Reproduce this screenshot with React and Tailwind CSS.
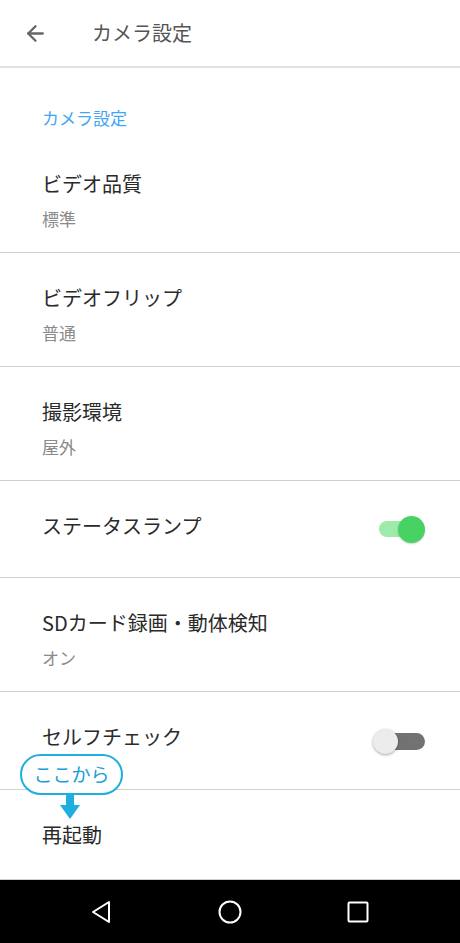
import React from 'react';
import { ArrowLeft } from 'lucide-react';

const font = { fontFamily: '"Noto Sans CJK JP", "Noto Sans", sans-serif' };

const Item = ({ title, sub, h, toggle, children }) => (
  <div className={`relative ${h} border-b border-[#cfcfcf] flex items-start justify-between pl-[42px] pr-[35px]`}>
    <div className="pt-[32px]">
      <div className="text-[20px] leading-[26px] text-[#2a2a2a]">{title}</div>
      {sub && <div className="mt-[11px] text-[17px] leading-[22px] text-[#8a8a8a]">{sub}</div>}
    </div>
    {toggle === 'on' && (
      <div className="mt-[35px] relative w-[48px] h-[26px] flex items-center">
        <div className="absolute left-[2px] w-[40px] h-[16px] rounded-full bg-[#9eeaa9]" />
        <div className="absolute right-0 w-[27px] h-[27px] rounded-full bg-[#47d363] shadow-[0_1px_2px_rgba(0,0,0,0.2)]" />
      </div>
    )}
    {toggle === 'off' && (
      <div className="mt-[36px] relative w-[52px] h-[26px] flex items-center">
        <div className="absolute right-0 w-[42px] h-[17px] rounded-full bg-[#727272]" />
        <div className="absolute left-0 w-[25px] h-[25px] rounded-full bg-[#ececec] shadow-[0_1px_3px_rgba(0,0,0,0.35)]" />
      </div>
    )}
    {children}
  </div>
);

export default function App() {
  return (
    <div className="w-[460px] h-[943px] bg-white flex flex-col overflow-hidden" style={font}>
      {/* toolbar */}
      <div className="h-[68px] shrink-0 flex items-center border-b-2 border-[#e2e2e2]">
        <ArrowLeft className="ml-[23px] w-[25px] h-[25px] text-[#666]" strokeWidth={2.2} />
        <span className="ml-[44px] text-[20px] text-[#555]">カメラ設定</span>
      </div>

      <div className="h-[71px] shrink-0 pl-[42px] pt-[38px]">
        <span className="text-[17px] leading-[22px] text-[#42a5f5]">カメラ設定</span>
      </div>

      <Item h="h-[114px]" title="ビデオ品質" sub="標準" />
      <Item h="h-[114px]" title="ビデオフリップ" sub="普通" />
      <Item h="h-[114px]" title="撮影環境" sub="屋外" />
      <Item h="h-[97px]" title="ステータスランプ" toggle="on" />
      <Item h="h-[114px]" title="SDカード録画・動体検知" sub="オン" />
      <Item h="h-[98px]" title="セルフチェック" toggle="off">
        {/* callout */}
        <div className="absolute left-[20px] top-[62px] z-10 flex flex-col items-center">
          <div className="w-[103px] h-[41px] rounded-full border-2 border-[#1eaee0] bg-white flex items-center justify-center">
            <span className="text-[19px] text-[#1a9fd8]">ここから</span>
          </div>
          <svg width="24" height="26" viewBox="0 0 24 26" className="-mt-[1px] -ml-[4px]">
            <rect x="8" y="0" width="8" height="12" fill="#1eaee0" />
            <polygon points="2,11 22,11 12,25" fill="#1eaee0" />
          </svg>
        </div>
      </Item>
      <Item h="h-[90px]" title="再起動" />

      {/* nav bar */}
      <div className="h-[63px] shrink-0 bg-black flex items-center justify-center">
        <div className="flex items-center gap-[104px]">
          <svg width="24" height="24" viewBox="0 0 24 24" className="ml-[6px]">
            <polygon points="19,2 19,22 3,12" fill="none" stroke="white" strokeWidth="2" strokeLinejoin="round" />
          </svg>
          <svg width="24" height="24" viewBox="0 0 24 24">
            <circle cx="12" cy="12" r="10.5" fill="none" stroke="white" strokeWidth="2" />
          </svg>
          <svg width="24" height="24" viewBox="0 0 24 24" className="mr-[6px]">
            <rect x="2.5" y="2.5" width="19" height="19" rx="1" fill="none" stroke="white" strokeWidth="2" />
          </svg>
        </div>
      </div>
    </div>
  );
}
